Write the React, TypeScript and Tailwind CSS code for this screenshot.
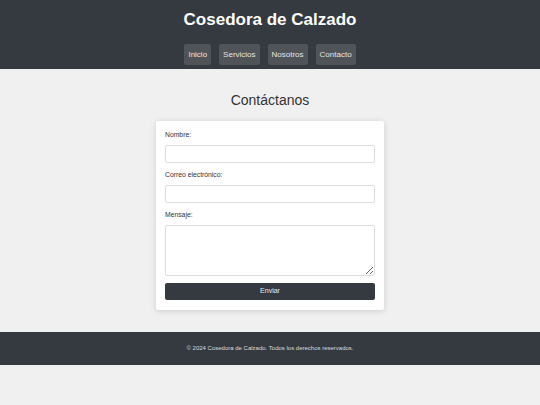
export default function App() {
  const links = ["Inicio", "Servicios", "Nosotros", "Contacto"];

  return (
    <div className="min-h-screen bg-[#f0f0f0] font-['Liberation_Sans',Arial,sans-serif] text-[#333]">
      {/* Header */}
      <header className="bg-[#343a40] pt-[8px] pb-[4px] text-center">
        <h1 className="text-[17px] leading-[24px] font-bold text-white">Cosedora de Calzado</h1>
        <nav className="mt-[12px] flex justify-center gap-[8px]">
          {links.map((l) => (
            <a
              key={l}
              href="#"
              className="h-[21px] px-[4px] flex items-center rounded-[2px] bg-[#505357] text-[8px] text-[#e6e6e6]"
            >
              {l}
            </a>
          ))}
        </nav>
      </header>

      {/* Main */}
      <main className="flex flex-col items-center pt-[21px] pb-[22px]">
        <h2 className="text-[14px] leading-[20px] text-[#333]">Contáctanos</h2>
        <form
          onSubmit={(e) => e.preventDefault()}
          className="mt-[11px] w-[228px] bg-white px-[9px] pt-[9px] pb-[10px] rounded-[2px] shadow-[0_1px_6px_rgba(0,0,0,0.15)]"
        >
          <label className="block text-[6.8px] leading-[10px] mb-[5px]">Nombre:</label>
          <input className="block w-full h-[18px] mb-[7px] border border-[#ddd] rounded-[2px] outline-none" />
          <label className="block text-[6.8px] leading-[10px] mb-[5px]">Correo electrónico:</label>
          <input className="block w-full h-[18px] mb-[7px] border border-[#ddd] rounded-[2px] outline-none" />
          <label className="block text-[6.8px] leading-[10px] mb-[5px]">Mensaje:</label>
          <textarea className="block w-full h-[51px] border border-[#ddd] rounded-[2px] outline-none" />
          <button
            type="submit"
            className="mt-[7px] w-full h-[17px] bg-[#343a40] rounded-[2px] text-[7px] text-[#eee]"
          >
            Enviar
          </button>
        </form>
      </main>

      {/* Footer */}
      <footer className="bg-[#343a40] h-[33px] flex items-center justify-center text-[6px] text-[#ddd]">
        © 2024 Cosedora de Calzado. Todos los derechos reservados.
      </footer>
    </div>
  );
}
